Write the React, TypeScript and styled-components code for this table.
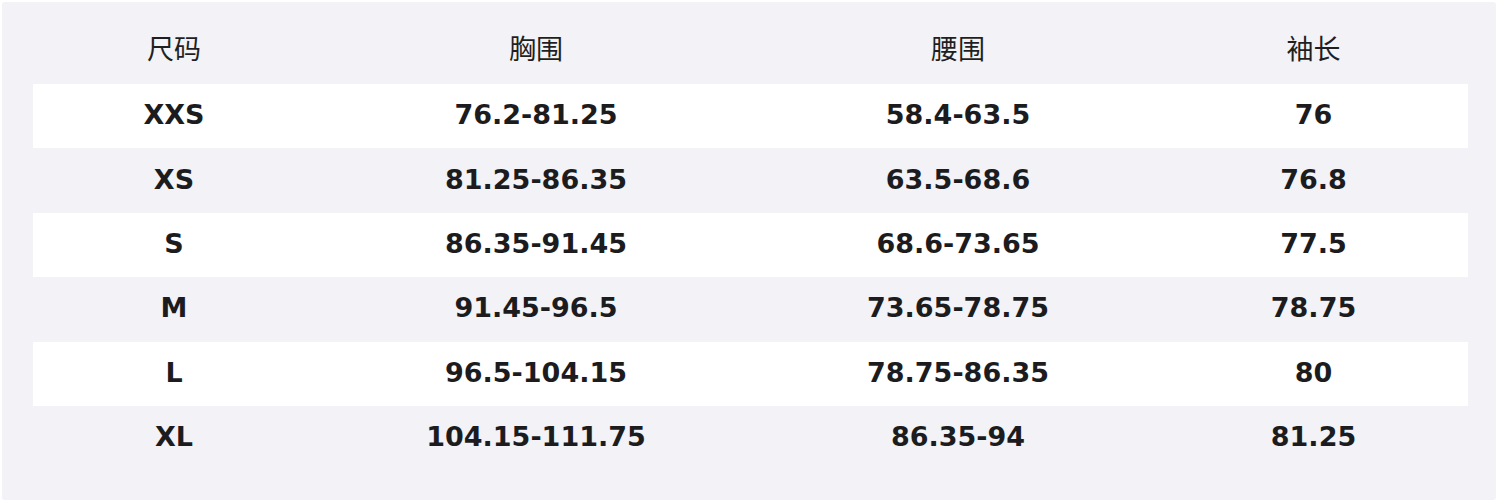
import * as React from "react";
import styled, { createGlobalStyle } from "styled-components";

const rows = [
  ["XXS", "76.2-81.25", "58.4-63.5", "76"],
  ["XS", "81.25-86.35", "63.5-68.6", "76.8"],
  ["S", "86.35-91.45", "68.6-73.65", "77.5"],
  ["M", "91.45-96.5", "73.65-78.75", "78.75"],
  ["L", "96.5-104.15", "78.75-86.35", "80"],
  ["XL", "104.15-111.75", "86.35-94", "81.25"],
];

const headers = ["尺码", "胸围", "腰围", "袖长"];

const App = () => {
  return (
    <>
      <GlobalStyle />
      <Panel>
        <Table>
          <HeadRow>
            {headers.map((h) => (
              <HeadCell key={h}>{h}</HeadCell>
            ))}
          </HeadRow>
          {rows.map((r, i) => (
            <Row key={r[0]} striped={i % 2 === 0}>
              {r.map((c, j) => (
                <Cell key={j}>{c}</Cell>
              ))}
            </Row>
          ))}
        </Table>
      </Panel>
    </>
  );
};

const GlobalStyle = createGlobalStyle`
  body {
    margin: 0;
    background: #ffffff;
    font-family: "DejaVu Sans", "Noto Sans CJK SC", sans-serif;
  }
`;

const Panel = styled.div`
  margin: 2px 4px 3px 2px;
  background: #f2f2f7;
  border-radius: 3px;
  padding: 18px 28px 30px 31px;
`;

const Table = styled.div`
  display: flex;
  flex-direction: column;
`;

const HeadRow = styled.div`
  display: grid;
  grid-template-columns: 282px 442px 402px 1fr;
  height: 64px;
  align-items: center;
`;

const HeadCell = styled.div`
  text-align: center;
  padding-bottom: 9px;
  font-family: "Noto Sans CJK SC", "DejaVu Sans", sans-serif;
  font-size: 27px;
  font-weight: 400;
  color: #1f1f22;
`;

const Row = styled.div<{ striped: boolean }>`
  display: grid;
  grid-template-columns: 282px 442px 402px 1fr;
  height: 64.4px;
  align-items: center;
  background: ${(p) => (p.striped ? "#ffffff" : "transparent")};
`;

const Cell = styled.div`
  text-align: center;
  padding-bottom: 3px;
  font-family: "DejaVu Sans", sans-serif;
  font-size: 27px;
  font-weight: 700;
  color: #1c1c1e;
`;

export default App;
